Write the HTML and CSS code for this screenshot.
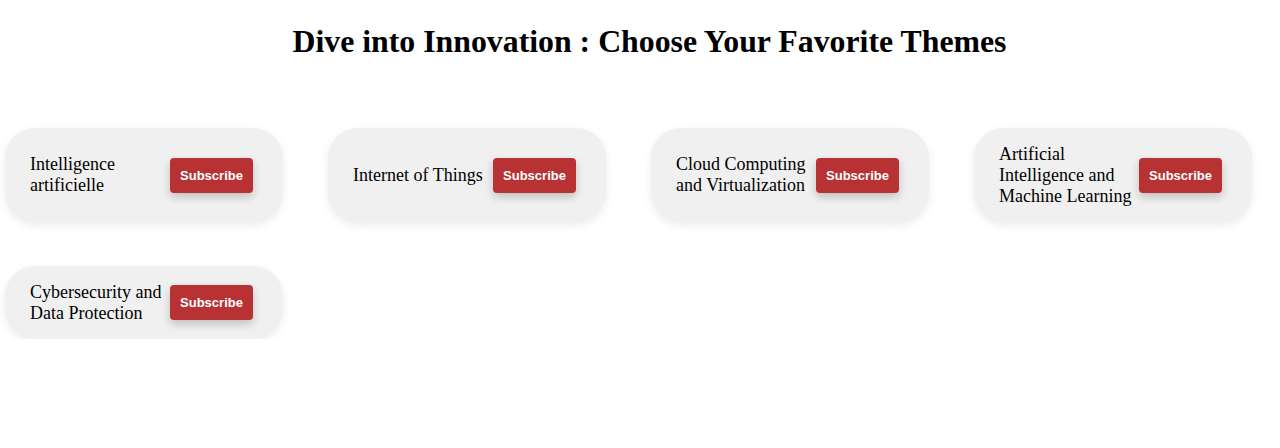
FILE: index.html
```html
<!DOCTYPE html>
<html>
<head>
<meta charset="utf-8">
<link rel="stylesheet" href="styles.css">
</head>
<body>
<h1 class="title">Dive into Innovation : Choose Your Favorite Themes</h1>
<div class="themes">
  <div class="card"><span class="name">Intelligence artificielle</span><button class="btn">Subscribe</button></div>
  <div class="card"><span class="name">Internet of Things</span><button class="btn">Subscribe</button></div>
  <div class="card"><span class="name">Cloud Computing and Virtualization</span><button class="btn">Subscribe</button></div>
  <div class="card"><span class="name">Artificial Intelligence and Machine Learning</span><button class="btn">Subscribe</button></div>
  <div class="card"><span class="name">Cybersecurity and Data Protection</span><button class="btn">Subscribe</button></div>
</div>
</body>
</html>
```
FILE: styles.css
```css
body {
  margin: 0;
  font-family: "Liberation Serif", "Times New Roman", serif;
  background: #fff;
  color: #000;
}
.title {
  text-align: center;
  font-size: 31.8px;
  font-weight: bold;
  margin: 24px 0 0;
  padding-left: 19px;
}
.themes {
  display: grid;
  grid-template-columns: repeat(4, 278px);
  column-gap: 45px;
  row-gap: 44px;
  padding: 0 0 0 5px;
  margin-top: 68px;
}
.card {
  display: flex;
  align-items: center;
  gap: 5px;
  background: #f0f0f0;
  border-radius: 30px;
  padding: 15.5px 30px 15.5px 25px;
  box-shadow: 0 3px 8px rgba(0, 0, 0, 0.08);
}
.name {
  flex: 1;
  min-width: 0;
  font-size: 18px;
}
.btn {
  flex: none;
  width: 83px;
  height: 35px;
  border: none;
  border-radius: 4px;
  background: #b83234;
  color: #fff;
  font-family: "Liberation Sans", Arial, sans-serif;
  font-weight: bold;
  font-size: 13px;
  box-shadow: 0 4px 8px rgba(0, 0, 0, 0.2);
  padding: 0;
}
```
